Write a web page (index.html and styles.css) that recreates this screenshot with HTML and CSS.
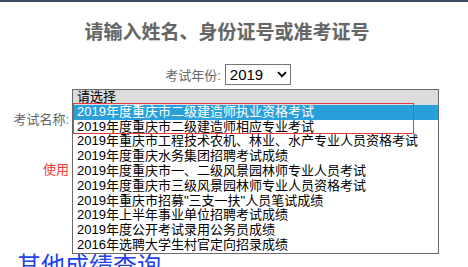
FILE: index.html
```html
<!DOCTYPE html>
<html lang="zh-CN">
<head>
<meta charset="utf-8">
<title>成绩查询</title>
<link rel="stylesheet" href="styles.css">
</head>
<body>
<div class="topbar"></div>
<div class="page">
  <h1 class="title">请输入姓名、身份证号或准考证号</h1>
  <div class="year-row">
    <span class="label-inline">考试年份:</span>
    <span class="fake-select">
      <span class="fake-value">2019</span>
      <svg class="chev" width="10" height="7" viewBox="0 0 10 7"><path d="M1 1.2 L5 5.2 L9 1.2" fill="none" stroke="#000" stroke-width="1.8"/></svg>
    </span>
  </div>
  <div class="form">
    <div class="form-row name-row">
      <span class="label">考试名称:</span>
    </div>
    <div class="form-row use-row">
      <span class="label red">使用</span>
    </div>
  </div>
  <a class="other" href="#">其他成绩查询</a>
</div>

<div class="listbox">
  <div class="opt opt-head">请选择</div>
  <div class="opt opt-sel">2019年度重庆市二级建造师执业资格考试</div>
  <div class="opt">2019年度重庆市二级建造师相应专业考试</div>
  <div class="opt">2019年重庆市工程技术农机、林业、水产专业人员资格考试</div>
  <div class="opt">2019年度重庆水务集团招聘考试成绩</div>
  <div class="opt">2019年度重庆市一、二级风景园林师专业人员考试</div>
  <div class="opt">2019年度重庆市三级风景园林师专业人员资格考试</div>
  <div class="opt">2019年重庆市招募"三支一扶"人员笔试成绩</div>
  <div class="opt">2019年上半年事业单位招聘考试成绩</div>
  <div class="opt">2019年度公开考试录用公务员成绩</div>
  <div class="opt">2016年选聘大学生村官定向招录成绩</div>
  <div class="mark"></div>
</div>
</body>
</html>
```

FILE: styles.css
```css
html, body {
  margin: 0;
  padding: 0;
  background: #fff;
  overflow: hidden;
}
body {
  font-family: "Liberation Sans", "Noto Sans CJK SC", sans-serif;
  font-size: 13px;
  color: #000;
  height: 267px;
  position: relative;
}
.topbar {
  height: 2px;
  background: #3e4c5f;
}
.page {
  width: 454px;
}
.title {
  margin: 19px 0 0;
  font-size: 19px;
  line-height: 24px;
  font-weight: bold;
  color: #666;
  text-align: center;
  text-shadow: 0 0 1px rgba(0,0,0,0.15);
}
.year-row {
  margin-top: 19px;
  display: flex;
  justify-content: center;
  align-items: center;
  gap: 4px;
  height: 21px;
}
.label-inline {
  color: #666;
  font-size: 13px;
  padding-left: 2px;
}
.fake-select {
  box-sizing: border-box;
  width: 66px;
  height: 21px;
  border: 1px solid #767676;
  display: flex;
  align-items: center;
  justify-content: space-between;
  padding: 0 3px 0 4px;
}
.fake-value {
  font-size: 15px;
  color: #000;
}
.form {
  display: flex;
  flex-direction: column;
}
.form-row {
  display: flex;
  align-items: center;
}
.label {
  width: 69px;
  text-align: right;
  color: #666;
  font-size: 13px;
}
.name-row {
  margin-top: 23px;
  height: 20px;
}
.use-row {
  margin-top: 30px;
  height: 20px;
}
.red {
  color: #f23b3b;
}
.other {
  display: block;
  margin: 75px 0 0 17px;
  font-size: 24px;
  line-height: 26px;
  color: #2142e6;
  text-decoration: none;
  white-space: nowrap;
}
.listbox {
  position: absolute;
  left: 72px;
  top: 89px;
  width: 365px;
  border: 1px solid #6a6a6a;
  background: #fff;
}
.opt {
  height: 14.8px;
  line-height: 14.8px;
  padding-left: 4px;
  font-size: 13px;
  white-space: nowrap;
  color: #000;
}
.opt-head {
  background: #dcdcdc;
}
.opt-sel {
  background: #29a0da;
  color: #fff;
}
.mark {
  position: absolute;
  left: 0;
  top: 13px;
  width: 339px;
  height: 29px;
  border: 1.5px solid #e8393c;
}
```
